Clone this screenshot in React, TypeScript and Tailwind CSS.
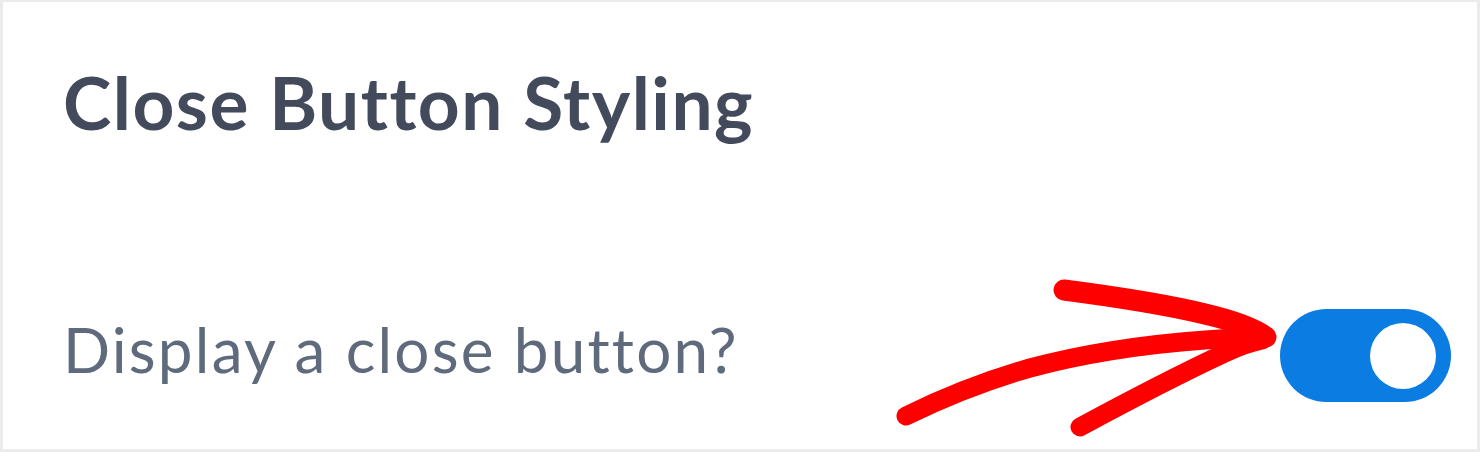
import React from 'react'

function Toggle({ on }: { on: boolean }) {
  return (
    <button
      type="button"
      aria-pressed={on}
      className="mt-[6px] flex h-[93px] w-[171px] shrink-0 items-center rounded-full bg-[#0b7ce1] px-[15px]"
    >
      <span className="ml-auto h-[66px] w-[66px] rounded-full bg-white" />
    </button>
  )
}

function HandArrow() {
  // hand drawn red marker arrow pointing at the toggle
  return (
    <svg
      className="pointer-events-none absolute left-0 top-0"
      width="1480"
      height="452"
      viewBox="0 0 1480 452"
      fill="none"
    >
      <g stroke="#ff0000" strokeLinecap="round" strokeLinejoin="round">
        <path d="M906 416 C 955 392, 995 378, 1030 368 C 1090 352, 1150 344, 1205 340 C 1232 338, 1250 337, 1264 338" strokeWidth="19" />
        <path d="M1064 290 C 1110 296, 1160 303, 1205 314 C 1235 321, 1255 329, 1266 337" strokeWidth="21" />
        <path d="M1080 427 C 1130 400, 1180 374, 1225 353 C 1240 346, 1252 342, 1262 340" strokeWidth="19" />
        <circle cx="1262" cy="338" r="11" fill="#ff0000" stroke="none" />
      </g>
    </svg>
  )
}

export default function App() {
  return (
    <div className="relative h-[452px] w-[1480px] overflow-hidden bg-white" style={{ fontFamily: 'Lato, "Noto Sans", sans-serif' }}>
      <div className="flex h-full flex-col border-t-2 border-l-[3px] border-r-[3px] border-b-[3px] border-[#ebebeb] pl-[60px] pr-[26px] pt-[64px]">
        <h2 className="text-[73px] font-bold leading-none tracking-[1.5px] text-[#434a5b]">Close Button Styling</h2>
        <div className="mt-[164px] flex items-start justify-between">
          <span className="mt-[15px] text-[62px] leading-none tracking-[2.2px] text-[#5f6a7c]">Display a close button?</span>
          <Toggle on />
        </div>
      </div>
      <HandArrow />
    </div>
  )
}
